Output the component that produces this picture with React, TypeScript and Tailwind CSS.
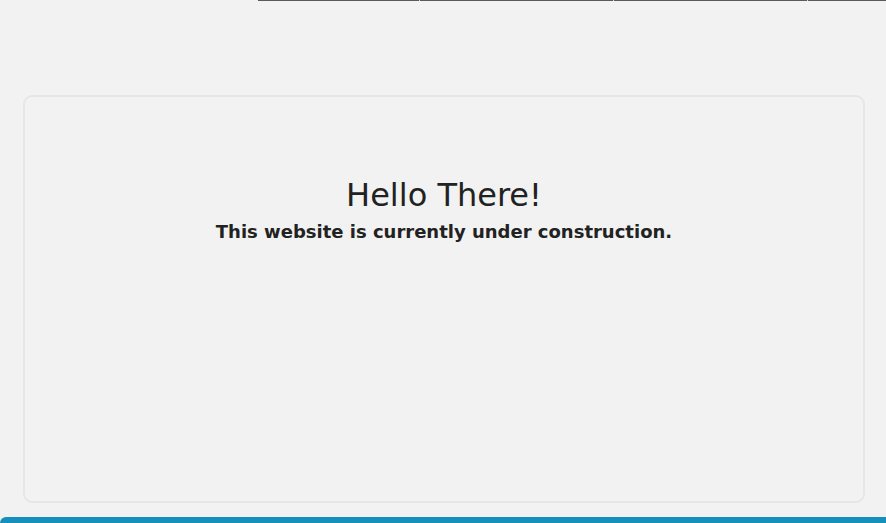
export default function App() {
  return (
    <div className="flex h-[523px] w-full flex-col overflow-hidden bg-[#f2f2f2] font-['DejaVu_Sans',Verdana,sans-serif] text-[#222]">
      <nav className="flex h-[95px] shrink-0 justify-end">
        <div className="flex h-px w-[628px] bg-[#5a5a5a]">
          <div className="w-[162px] border-r border-[#d8d8d8]" />
          <div className="w-[194px] border-r border-[#d8d8d8]" />
          <div className="w-[194px] border-r border-[#d8d8d8]" />
          <div className="flex-1" />
        </div>
      </nav>

      <main className="ml-[23px] mr-[21px] flex h-[408px] shrink-0 flex-col items-center rounded-[9px] border-2 border-[#e6e6e6] pt-[76px]">
        <h1 className="text-[32px] leading-[44px] font-normal">Hello There!</h1>
        <p className="mt-[3px] text-[18px] leading-[24px] font-bold">
          This website is currently under construction.
        </p>
      </main>

      <div className="flex-1" />
      <footer className="h-[6px] shrink-0 rounded-tl-[10px] bg-[#168fbd]" />
    </div>
  )
}
